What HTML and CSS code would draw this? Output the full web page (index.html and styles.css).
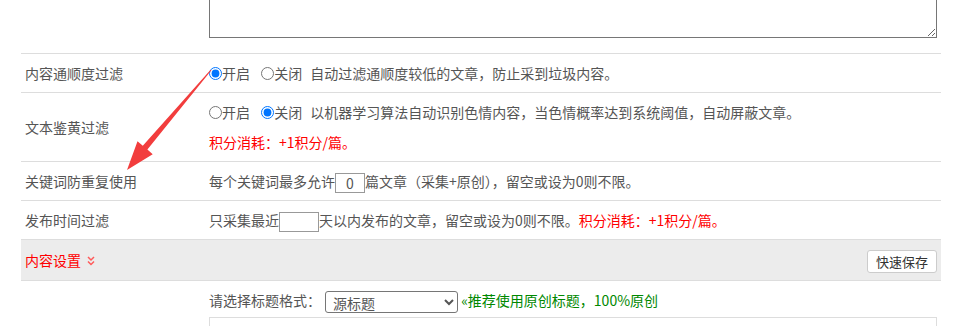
FILE: index.html
```html
<!DOCTYPE html>
<html lang="zh-CN">
<head>
  <meta charset="UTF-8">
  <meta name="viewport" content="width=device-width, initial-scale=1.0">
  <title>采集设置</title>
  <link rel="stylesheet" href="styles.css">
</head>
<body>
  <div class="page">
    <table class="form-table">
      <tr>
        <td class="label"></td>
        <td class="value">
          <textarea class="big-area"></textarea>
        </td>
      </tr>
      <tr>
        <td class="label">内容通顺度过滤</td>
        <td class="value">
          <label class="opt"><input type="radio" name="fluency" checked>开启</label>
          <label class="opt opt-last"><input type="radio" name="fluency">关闭</label>
          自动过滤通顺度较低的文章，防止采到垃圾内容。
        </td>
      </tr>
      <tr>
        <td class="label">文本鉴黄过滤</td>
        <td class="value">
          <label class="opt"><input type="radio" name="porn">开启</label>
          <label class="opt opt-last"><input type="radio" name="porn" checked>关闭</label>
          以机器学习算法自动识别色情内容，当色情概率达到系统阈值，自动屏蔽文章。
          <p class="cost">积分消耗：+1积分/篇。</p>
        </td>
      </tr>
      <tr>
        <td class="label">关键词防重复使用</td>
        <td class="value">
          每个关键词最多允许<input type="text" class="num num-sm" value="0">篇文章（采集+原创），留空或设为0则不限。
        </td>
      </tr>
      <tr>
        <td class="label">发布时间过滤</td>
        <td class="value">
          只采集最近<input type="text" class="num num-md" value="">天以内发布的文章，留空或设为0则不限。<span class="red">积分消耗：+1积分/篇。</span>
        </td>
      </tr>
      <tr class="section">
        <td class="label">
          <span class="section-title">内容设置</span>
          <svg class="chev" width="8" height="10" viewBox="0 0 8 10">
            <path d="M1 1 L4 4 L7 1 M1 5.5 L4 8.5 L7 5.5" fill="none" stroke="#ff5a5a" stroke-width="1.5"/>
          </svg>
        </td>
        <td class="value section-actions">
          <button class="save-btn">快速保存</button>
        </td>
      </tr>
      <tr>
        <td class="label"></td>
        <td class="value">
          请选择标题格式：<select class="title-select">
            <option>源标题</option>
            <option>原创标题</option>
          </select>
          <span class="green">«推荐使用原创标题，100%原创</span>
          <div class="sub-box"></div>
        </td>
      </tr>
    </table>

    <!-- 标注箭头 -->
    <svg class="arrow" width="957" height="326" viewBox="0 0 957 326">
      <polygon fill="#f23d3d" points="211.4,70.3 147.4,149.6 152.7,154.2 127,170 137.5,141.2 142.8,145.8 210.6,69.7"/>
    </svg>
  </div>
</body>
</html>
```

FILE: styles.css
```css
body {
  margin: 0;
  background: #fff;
  font-family: "Noto Sans CJK SC", "Microsoft YaHei", sans-serif;
  font-size: 14px;
  color: #555;
}
.page {
  position: relative;
  display: flow-root;
  padding: 0 16px 0 21px;
}
.form-table {
  width: 920px;
  border-collapse: collapse;
  margin-top: -40px;
}
.form-table td {
  border-bottom: 1px solid #ddd;
  padding: 7px 4px 7px 0;
  line-height: 24px;
  vertical-align: middle;
}
.form-table td.label {
  width: 184px;
  padding-left: 4px;
  color: #555;
}
.big-area {
  display: block;
  box-sizing: border-box;
  width: 728px;
  height: 71px;
  margin: 0 0 8px;
  border: 1px solid #767676;
  resize: vertical;
}
.opt {
  margin-right: 8px;
}
.opt-last {
  margin-right: 5px;
}
.opt input {
  width: 13px;
  height: 13px;
  margin: 0;
  vertical-align: -1px;
}
.cost {
  margin: 6px 0 0;
  color: #f00;
}
.red {
  color: #f00;
}
.green {
  color: #080;
}
.num {
  box-sizing: border-box;
  height: 20px;
  border: 1px solid #999;
  padding: 0;
  margin: 0;
  font-family: inherit;
  font-size: 14px;
  color: #555;
  text-align: center;
  vertical-align: middle;
}
.num-sm {
  width: 30px;
}
.num-md {
  width: 40px;
}
.section td {
  background: #ececec;
}
.section-title {
  color: #f00;
}
.chev {
  margin-left: 3px;
  vertical-align: 0;
}
.section-actions {
  text-align: right;
}
.save-btn {
  box-sizing: border-box;
  height: 23px;
  padding: 0 8px;
  border: 1px solid #ccc;
  border-radius: 3px;
  background: #fff;
  font-family: inherit;
  font-size: 13px;
  color: #333;
  line-height: 21px;
  vertical-align: middle;
}
.title-select {
  box-sizing: border-box;
  width: 133px;
  height: 22px;
  margin-left: 4px;
  padding-left: 3px;
  border: 1px solid #767676;
  border-radius: 3px;
  background-color: #fff;
  font-family: inherit;
  font-size: 14px;
  color: #555;
  vertical-align: middle;
}
.sub-box {
  box-sizing: border-box;
  width: 728px;
  height: 40px;
  margin-top: 4px;
  border: 1px solid #ddd;
}
.arrow {
  position: absolute;
  left: 0;
  top: 0;
  pointer-events: none;
}
```
